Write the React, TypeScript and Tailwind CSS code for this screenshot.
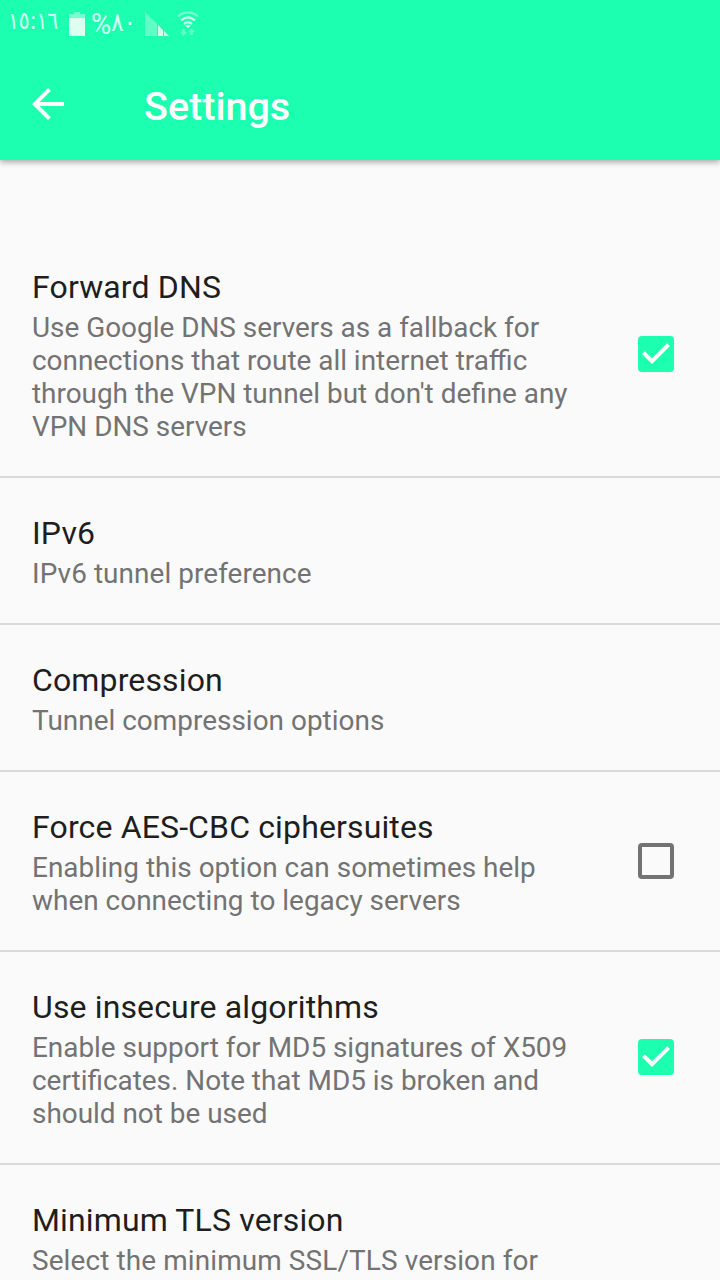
import { useState } from "react";

const PREFERENCES = [
    {
        title: "Forward DNS",
        summary: "Use Google DNS servers as a fallback for connections that route all internet traffic through the VPN tunnel but don't define any VPN DNS servers",
        checked: true,
    },
    { title: "IPv6", summary: "IPv6 tunnel preference", className: "tracking-[0.08px]" },
    { title: "Compression", summary: "Tunnel compression options", className: "tracking-[0.03px]" },
    {
        title: "Force AES-CBC ciphersuites",
        summary: "Enabling this option can sometimes help when connecting to legacy servers",
        checked: false,
        className: "tracking-[0.03px]",
    },
    {
        title: "Use insecure algorithms",
        summary: "Enable support for MD5 signatures of X509 certificates. Note that MD5 is broken and should not be used",
        checked: true,
    },
    { title: "Minimum TLS version", summary: "Select the minimum SSL/TLS version for", className: "tracking-[0.13px]" },
];

function StatusBar() {
    return (
        <div className="flex h-12 items-start pl-2 text-white/80" style={{ fontFamily: '"DejaVu Sans", sans-serif' }}>
            <span className="mt-[7px] w-[51px] whitespace-nowrap">
                <span className="block w-max origin-left scale-x-[0.84] text-[24px] leading-[28px]">١٥:١٦</span>
            </span>
            <svg className="mt-3 ml-2.5" width="16" height="24" viewBox="0 0 16 24">
                <path d="M5 0h6v2h5v4H0V2h5z" fill="#fff" fillOpacity=".4" />
                <path d="M0 6h16v18H0z" fill="#fff" fillOpacity=".85" />
            </svg>
            <span className="mt-2 ml-1.5 w-5 font-[Roboto] text-[29px] leading-[32px]">
                <span className="block w-max origin-left scale-x-[0.95]">%</span>
            </span>
            <span className="mt-2 w-6 whitespace-nowrap">
                <span className="block w-max origin-left scale-x-[0.9] text-[26px] leading-[28px]">٨٠</span>
            </span>
            <svg className="mt-3 ml-[10px]" width="24" height="24" viewBox="0 0 24 24">
                <path d="M0 0l12 12v12H0z" fill="#fff" fillOpacity=".3" />
                <path d="M13 13l5 5v6h-5zM19 19l5 5h-5z" fill="#fff" fillOpacity=".8" />
            </svg>
            <svg className="mt-[11px] ml-2" width="22" height="25" viewBox="0 0 22 25" fill="none">
                <path d="M1 5.5Q11-3 21 5.5" stroke="#fff" strokeOpacity=".4" strokeWidth="2.2" />
                <path d="M4 9.5Q11 3.4 18 9.5M7 13Q11 9.3 15 13" stroke="#fff" strokeOpacity=".8" strokeWidth="2.2" />
                <path d="M8.2 14.5Q11 12.8 13.8 14.5L11 17z" fill="#fff" fillOpacity=".8" />
                <path d="M5 18h3v3h2l-3.5 4L3 21h2zM13 24h3v-3h2l-3.5-4-3.5 4h2z" fill="#fff" fillOpacity=".3" />
            </svg>
        </div>
    );
}

function Checkbox({ checked }: { checked: boolean }) {
    if (!checked) {
        return <span className="block size-9 rounded-[4px] border-4 border-[#737373]" />;
    }

    return (
        <span className="block size-9 rounded-[4px] bg-[#1dffb0]">
            <svg width="36" height="36" viewBox="0 0 36 36" fill="#fff">
                <path d="M14 28L4 18l2.8-2.8 7.2 7.1L29.2 7.2 32 10z" />
            </svg>
        </span>
    );
}

function Preference({ title, summary, initial, className = "" }: { title: string, summary: string, initial?: boolean, className?: string }) {
    const [checked, setChecked] = useState(initial);

    return (
        <div
            className="flex shrink-0 items-center border-b-2 border-[#dadada] pt-9 pb-[33px] pl-8"
            onClick={() => { if (checked !== undefined) setChecked(!checked); }}
        >
            <div className="w-[550px]">
                <div className="text-[32px] leading-[38px] tracking-[0.14px] text-[#1e1e1e]">{title}</div>
                <div className={`mt-[5px] text-[27.9px] leading-[33px] text-[#737373] ${className}`}>{summary}</div>
            </div>
            {checked !== undefined && (
                <div className="mb-1 ml-14">
                    <Checkbox checked={checked} />
                </div>
            )}
        </div>
    );
}

export default function App() {
    return (
        <div className="flex h-[1280px] w-[720px] flex-col overflow-hidden bg-[#fafafa] font-[Roboto,sans-serif]">
            <header className="z-10 h-40 shrink-0 bg-[#1dffb0] shadow-[0_2px_6px_rgba(0,0,0,0.35)]">
                <StatusBar />
                <div className="flex h-28 items-center">
                    <button type="button" className="ml-8">
                        <svg width="32" height="32" viewBox="4 4 16 16" fill="#fff">
                            <path d="M20 11H7.83l5.59-5.59L12 4l-8 8 8 8 1.41-1.41L7.83 13H20v-2z" />
                        </svg>
                    </button>
                    <h1 className="mt-1.5 ml-20 text-[39.5px] leading-[48px] font-medium text-white">Settings</h1>
                </div>
            </header>
            <main className="flex flex-col pt-[72px]">
                {PREFERENCES.map(p => (
                    <Preference key={p.title} title={p.title} summary={p.summary} initial={p.checked} className={p.className} />
                ))}
            </main>
        </div>
    );
}
